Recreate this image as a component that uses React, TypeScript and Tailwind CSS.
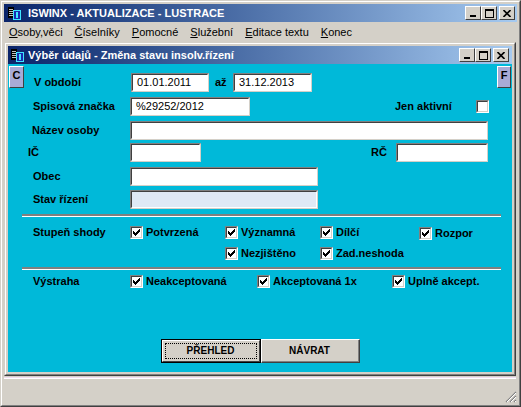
import React from "react";

const CHECK_PATH =
  "M0 2h1v3H0z M1 3h1v3H1z M2 4h1v3H2z M3 3h1v3H3z M4 2h1v3H4z M5 1h1v3H5z M6 0h1v3H6z";

function Check({ checked = true }: { checked?: boolean }) {
  return (
    <span className="block w-[13px] h-[13px] shrink-0 border border-t-[#808080] border-l-[#808080] border-r-white border-b-white">
      <span className="flex w-full h-full items-center justify-center bg-white border border-t-[#404040] border-l-[#404040] border-r-[#d4d0c8] border-b-[#d4d0c8]">
        {checked && (
          <svg width="7" height="7" viewBox="0 0 7 7" shapeRendering="crispEdges">
            <path d={CHECK_PATH} fill="#000" />
          </svg>
        )}
      </span>
    </span>
  );
}

function Field({ w, value, bg = "bg-white" }: { w: string; value?: string; bg?: string }) {
  return (
    <div
      className={`${w} h-[19px] shrink-0 ${bg} border border-t-[#808080] border-l-[#808080] border-r-[#d4d0c8] border-b-[#d4d0c8]`}
    >
      <div className="h-full border border-t-[#404040] border-l-[#404040] border-r-white border-b-white px-[4px] flex items-center text-[11px] text-black leading-none">
        {value}
      </div>
    </div>
  );
}

function CheckItem({ label, w }: { label: string; w?: string }) {
  return (
    <div className={`flex items-center gap-[3px] ${w ?? ""} shrink-0`}>
      <Check />
      <span className="text-[11px] font-bold leading-none">{label}</span>
    </div>
  );
}

function WinIcon() {
  return (
    <svg width="13" height="13" viewBox="0 0 13 13" shapeRendering="crispEdges">
      <rect x="0" y="0" width="6" height="11" fill="#000" />
      <rect x="1" y="2" width="4" height="1" fill="#c0c0c0" />
      <rect x="1" y="4" width="4" height="1" fill="#c0c0c0" />
      <rect x="1" y="6" width="4" height="1" fill="#c0c0c0" />
      <rect x="1" y="8" width="4" height="1" fill="#c0c0c0" />
      <rect x="5.5" y="3.5" width="7" height="9" fill="#1a2ab0" stroke="#3ee6ff" />
      <rect x="8" y="5" width="2" height="6" fill="#3ee6ff" />
    </svg>
  );
}

function CaptionButtons({ wide = false }: { wide?: boolean }) {
  const btn =
    "w-[16px] h-[14px] bg-[#d4d0c8] border border-t-white border-l-white border-r-[#404040] border-b-[#404040] flex items-center justify-center";
  return (
    <div className={`flex items-center ${wide ? "mr-[2px]" : "mr-[3px]"}`}>
      <div className={btn}>
        <svg width="8" height="8" viewBox="0 0 8 8" shapeRendering="crispEdges">
          <rect x="1" y="6" width="6" height="2" fill="#000" />
        </svg>
      </div>
      <div className={btn}>
        <svg width="9" height="9" viewBox="0 0 9 9" shapeRendering="crispEdges">
          <rect x="0" y="0" width="9" height="2" fill="#000" />
          <rect x="0" y="0" width="1" height="9" fill="#000" />
          <rect x="8" y="0" width="1" height="9" fill="#000" />
          <rect x="0" y="8" width="9" height="1" fill="#000" />
        </svg>
      </div>
      <div className={`${btn} ml-[2px]`}>
        <svg width="8" height="7" viewBox="0 0 8 7">
          <path d="M0.5 0 L7.5 7 M7.5 0 L0.5 7" stroke="#000" strokeWidth="1.6" />
        </svg>
      </div>
    </div>
  );
}

const menu = [
  { u: "O", rest: "soby,věci" },
  { u: "Č", rest: "íselníky" },
  { u: "P", rest: "omocné" },
  { u: "S", rest: "lužební" },
  { u: "E", rest: "ditace textu" },
  { u: "K", rest: "onec" },
];

export default function App() {
  return (
    <div className="w-[521px] h-[407px] bg-[#d4d0c8] border border-t-[#d4d0c8] border-l-[#d4d0c8] border-r-[#404040] border-b-[#404040] font-['Liberation_Sans',Arial,sans-serif] text-black overflow-hidden">
      <div className="h-full flex flex-col border border-t-white border-l-white border-r-[#808080] border-b-[#808080] p-[2px]">
        {/* Main title bar */}
        <div className="h-[18px] shrink-0 flex items-center bg-gradient-to-r from-[#0a246a] to-[#a6caf0]">
          <div className="ml-[4px]">
            <WinIcon />
          </div>
          <span className="ml-[7px] text-[11px] font-bold text-white leading-none">
            ISWINX - AKTUALIZACE - LUSTRACE
          </span>
          <div className="ml-auto">
            <CaptionButtons wide />
          </div>
        </div>

        {/* Menu */}
        <div className="h-[20px] shrink-0 flex items-center pl-[5px] text-[11px] leading-none">
          {menu.map((m) => (
            <span key={m.rest} className="mr-[12px]">
              <span className="underline underline-offset-[1px]">{m.u}</span>
              {m.rest}
            </span>
          ))}
        </div>

        {/* Child window */}
        <div className="w-[512px] h-[334px] shrink-0 border border-t-[#d4d0c8] border-l-[#d4d0c8] border-r-[#404040] border-b-[#404040]">
          <div className="h-full border border-t-white border-l-white border-r-[#808080] border-b-[#808080] p-[2px] flex flex-col">
            <div className="h-[18px] shrink-0 flex items-center bg-gradient-to-r from-[#0a246a] to-[#a6caf0]">
              <div className="ml-[3px]">
                <WinIcon />
              </div>
              <span className="ml-[4px] text-[11px] font-bold text-white leading-none">
                Výběr údajů - Změna stavu insolv.řízení
              </span>
              <div className="ml-auto">
                <CaptionButtons />
              </div>
            </div>

            {/* Form */}
            <div className="flex-1 bg-[#00b9d9] flex flex-col">
              <div className="h-[28px] flex items-start">
                <div className="ml-[1px] mt-[2px] w-[15px] h-[22px] bg-[#a9abd6] border border-t-white border-l-white border-r-[#404040] border-b-[#404040] flex items-start justify-center pt-[3px] text-[11px] font-bold leading-none">
                  C
                </div>
                <div className="mt-[9px] ml-[10px] w-[97px] h-[19px] flex items-center text-[11px] font-bold">
                  V období
                </div>
                <div className="mt-[9px]">
                  <Field w="w-[78px]" value="01.01.2011" />
                </div>
                <div className="mt-[9px] ml-[6px] w-[18px] h-[19px] flex items-center text-[11px] font-bold">
                  až
                </div>
                <div className="mt-[9px]">
                  <Field w="w-[79px]" value="31.12.2013" />
                </div>
                <div className="ml-auto mr-[1px] mt-[2px] w-[14px] h-[22px] bg-[#a9abd6] border border-t-white border-l-white border-r-[#404040] border-b-[#404040] flex items-start justify-center pt-[3px] text-[11px] font-bold leading-none">
                  F
                </div>
              </div>

              <div className="mt-[5px] h-[19px] flex items-center pl-[25px]">
                <span className="w-[97px] text-[11px] font-bold">Spisová značka</span>
                <Field w="w-[120px]" value="%29252/2012" />
                <span className="ml-[145px] w-[81px] text-[11px] font-bold">Jen aktivní</span>
                <Check checked={false} />
              </div>

              <div className="mt-[5px] h-[19px] flex items-center pl-[24px]">
                <span className="w-[98px] text-[11px] font-bold">Název osoby</span>
                <Field w="w-[358px]" />
              </div>

              <div className="mt-[3px] h-[19px] flex items-center pl-[20px]">
                <span className="w-[102px] text-[11px] font-bold">IČ</span>
                <Field w="w-[71px]" />
                <span className="ml-[170px] w-[25px] text-[11px] font-bold">RČ</span>
                <Field w="w-[92px]" />
              </div>

              <div className="mt-[5px] h-[19px] flex items-center pl-[25px]">
                <span className="w-[97px] text-[11px] font-bold">Obec</span>
                <Field w="w-[188px]" />
              </div>

              <div className="mt-[4px] h-[19px] flex items-center pl-[25px]">
                <span className="w-[97px] text-[11px] font-bold">Stav řízení</span>
                <Field w="w-[188px]" bg="bg-[#dfe9f5]" />
              </div>

              <div className="mt-[5px] ml-[14px] w-[479px] border-t-2 border-t-[#808080] border-b border-b-white" />

              <div className="mt-[9px] h-[13px] flex items-center pl-[25px]">
                <span className="w-[97px] text-[11px] font-bold">Stupeň shody</span>
                <CheckItem label="Potvrzená" w="w-[95px]" />
                <CheckItem label="Významná" w="w-[95px]" />
                <CheckItem label="Dílčí" w="w-[99px]" />
                <div className="mt-[2px]">
                  <CheckItem label="Rozpor" />
                </div>
              </div>

              <div className="mt-[8px] h-[13px] flex items-center pl-[217px]">
                <CheckItem label="Nezjištěno" w="w-[95px]" />
                <CheckItem label="Zad.neshoda" />
              </div>

              <div className="mt-[7px] ml-[14px] w-[479px] border-t-2 border-t-[#808080] border-b border-b-white" />

              <div className="mt-[5px] h-[13px] flex items-center pl-[25px]">
                <span className="w-[97px] text-[11px] font-bold">Výstraha</span>
                <CheckItem label="Neakceptovaná" w="w-[127px]" />
                <CheckItem label="Akceptovaná 1x" w="w-[135px]" />
                <CheckItem label="Uplně akcept." />
              </div>

              <div className="mt-[51px] flex justify-center">
                <div className="w-[100px] h-[24px] border border-black">
                  <div className="h-full bg-[#d4d0c8] border border-t-white border-l-white border-r-[#404040] border-b-[#404040] p-[2px]">
                    <div className="h-full border border-dotted border-black flex items-center justify-center text-[10px] font-bold leading-none">
                      PŘEHLED
                    </div>
                  </div>
                </div>
                <div className="w-[99px] h-[24px] bg-[#d4d0c8] border border-t-white border-l-white border-r-[#404040] border-b-[#404040]">
                  <div className="h-full border-r border-b border-r-[#808080] border-b-[#808080] flex items-center justify-center text-[10px] font-bold leading-none">
                    NÁVRAT
                  </div>
                </div>
              </div>
            </div>
          </div>
        </div>

        {/* Status area */}
        <div className="mt-[1px] h-px w-[512px] bg-[#f0dcf0]" />
        <div className="h-px w-[512px] bg-white" />
        <div className="flex-1 flex items-end justify-end">
          <svg width="12" height="12" viewBox="0 0 12 12">
            <path d="M11 1 L1 11 M11 5 L5 11 M11 9 L9 11" stroke="#808080" strokeWidth="1.2" />
            <path d="M11 2 L2 11 M11 6 L6 11 M11 10 L10 11" stroke="#ffffff" strokeWidth="1" />
          </svg>
        </div>
      </div>
    </div>
  );
}
